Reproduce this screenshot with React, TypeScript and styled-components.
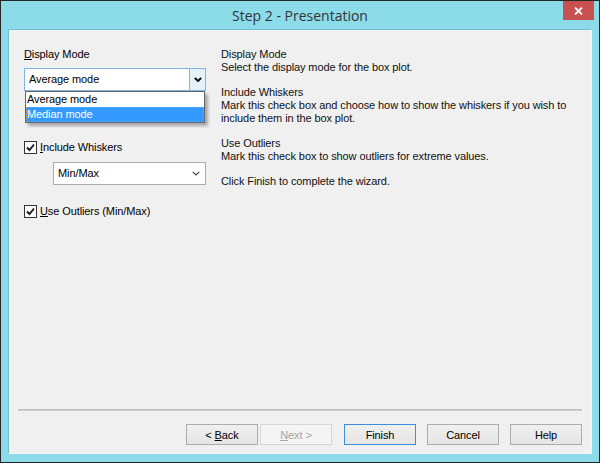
import React from "react";
import styled, { createGlobalStyle } from "styled-components";

const Global = createGlobalStyle`
  html, body { margin: 0; padding: 0; background: #ffffff; }
  * { box-sizing: border-box; }
`;

const Window = styled.div`
  width: 600px;
  height: 463px;
  background: #8cdbe9;
  border: 1px solid #262626;
  display: flex;
  flex-direction: column;
  font-family: "Liberation Sans", Arial, sans-serif;
  font-size: 11px;
  letter-spacing: -0.1px;
  color: #000;
`;

const TitleBar = styled.div`
  height: 28px;
  display: grid;
  grid-template-columns: 1fr auto 1fr;
  align-items: center;
`;

const Title = styled.div`
  grid-column: 2;
  font-family: "Open Sans", "Noto Sans", sans-serif;
  font-size: 14px;
  letter-spacing: 0;
  color: #333333;
  padding-top: 1px;
`;

const CloseButton = styled.div`
  grid-column: 3;
  justify-self: end;
  align-self: start;
  width: 31px;
  height: 19px;
  margin-right: 5px;
  background: #c75050;
  display: flex;
  align-items: center;
  justify-content: center;
`;

const Client = styled.div`
  flex: 1;
  margin: 0 7px 8px;
  background: #f0f0f0;
  border: 1px solid;
  border-color: #72bfcd #f6f6f6 #f6f6f6 #72bfcd;
  display: flex;
  flex-direction: column;
`;

const Body = styled.div`
  display: flex;
  gap: 15px;
  padding: 18px 0 0 15px;
`;

const LeftColumn = styled.div`
  width: 182px;
  display: flex;
  flex-direction: column;
  align-items: flex-start;
`;

const FieldLabel = styled.div`
  line-height: 13px;
  height: 13px;
  margin-bottom: 7px;
`;

const Mnemonic = styled.span`
  text-decoration: underline;
  text-underline-offset: 1px;
`;

const ComboWrap = styled.div<{ $indent?: number; $top?: number }>`
  position: relative;
  margin-left: ${(p) => p.$indent ?? 0}px;
  margin-top: ${(p) => p.$top ?? 0}px;
  width: ${(p) => 182 - (p.$indent ?? 0)}px;
`;

const Combo = styled.div<{ $focused?: boolean }>`
  height: 23px;
  display: flex;
  align-items: stretch;
  background: #ffffff;
  border: 1px solid ${(p) => (p.$focused ? "#7eb4ea" : "#acacac")};
`;

const ComboText = styled.div`
  flex: 1;
  padding-left: 4px;
  line-height: 21px;
  white-space: nowrap;
`;

const DropButton = styled.div<{ $focused?: boolean }>`
  width: 16px;
  display: flex;
  align-items: center;
  justify-content: center;
  background: ${(p) => (p.$focused ? "#e5f1fb" : "transparent")};
  border-left: 1px solid ${(p) => (p.$focused ? "#7eb4ea" : "transparent")};
  margin-right: ${(p) => (p.$focused ? 0 : 2)}px;
`;

const DropList = styled.div`
  position: absolute;
  top: 23px;
  left: 1px;
  width: 180px;
  background: #ffffff;
  border: 1px solid #646464;
  box-shadow: 3px 3px 3px rgba(0, 0, 0, 0.3);
  z-index: 2;
`;

const DropItem = styled.div<{ $selected?: boolean }>`
  height: 15px;
  line-height: 14px;
  padding-left: 1px;
  background: ${(p) => (p.$selected ? "#3399ff" : "#ffffff")};
  color: ${(p) => (p.$selected ? "#ffffff" : "#000000")};
  outline: ${(p) => (p.$selected ? "1px dotted #e8923a" : "none")};
  outline-offset: -1px;
`;

const CheckRow = styled.div<{ $top: number }>`
  display: flex;
  align-items: center;
  gap: 3px;
  margin-top: ${(p) => p.$top}px;
  height: 13px;
  line-height: 13px;
`;

const CheckBox = styled.div`
  width: 13px;
  height: 13px;
  border: 1px solid #333333;
  background: #ffffff;
  display: flex;
  align-items: center;
  justify-content: center;
`;

const RightColumn = styled.div`
  line-height: 12.7px;
  white-space: nowrap;
  color: #111;
`;

const Paragraph = styled.p`
  margin: 0 0 12.7px;
`;

const Footer = styled.div`
  margin-top: auto;
  padding: 0 9px 8px;
`;

const Separator = styled.div`
  height: 2px;
  background: #cdcdcd;
  border-top: 1px solid #bdbdbd;
`;

const ButtonRow = styled.div`
  margin-top: 13px;
  display: flex;
  justify-content: flex-end;
  gap: 11px;
`;

const ButtonPair = styled.div`
  display: flex;
  gap: 2px;
  margin-right: 1px;
`;

const Button = styled.div<{ $default?: boolean; $disabled?: boolean }>`
  width: 72px;
  height: 21px;
  display: flex;
  align-items: center;
  justify-content: center;
  border: 1px solid
    ${(p) => (p.$default ? "#3c8fe0" : p.$disabled ? "#d6d6d6" : "#acacac")};
  background: ${(p) =>
    p.$disabled ? "#f4f4f4" : "linear-gradient(#f0f0f0, #e5e5e5)"};
  color: ${(p) => (p.$disabled ? "#a3a3a3" : "#000")};
  white-space: nowrap;
`;

const Check = () => (
  <svg width="9" height="9" viewBox="0 0 9 9">
    <path d="M1 4.5 L3.5 7 L8 1.5" fill="none" stroke="#1a1a1a" strokeWidth="1.9" />
  </svg>
);

const Chevron = ({ bold }: { bold?: boolean }) => (
  <svg width="8" height="5" viewBox="0 0 8 5">
    <path
      d="M0.8 0.8 L4 4 L7.2 0.8"
      fill="none"
      stroke={bold ? "#000" : "#444"}
      strokeWidth={bold ? 1.9 : 1.2}
    />
  </svg>
);

export default function App() {
  return (
    <>
      <Global />
      <Window>
        <TitleBar>
          <Title>Step 2 - Presentation</Title>
          <CloseButton>
            <svg width="9" height="8" viewBox="0 0 9 8">
              <path d="M1 0.5 L8 7.5 M8 0.5 L1 7.5" stroke="#fff" strokeWidth="1.8" />
            </svg>
          </CloseButton>
        </TitleBar>
        <Client>
          <Body>
            <LeftColumn>
              <FieldLabel>
                <Mnemonic>D</Mnemonic>isplay Mode
              </FieldLabel>
              <ComboWrap>
                <Combo $focused>
                  <ComboText>Average mode</ComboText>
                  <DropButton $focused>
                    <Chevron bold />
                  </DropButton>
                </Combo>
                <DropList>
                  <DropItem>Average mode</DropItem>
                  <DropItem $selected>Median mode</DropItem>
                </DropList>
              </ComboWrap>
              <CheckRow $top={50}>
                <CheckBox>
                  <Check />
                </CheckBox>
                <span>
                  <Mnemonic>I</Mnemonic>nclude Whiskers
                </span>
              </CheckRow>
              <ComboWrap $indent={29} $top={8}>
                <Combo>
                  <ComboText>Min/Max</ComboText>
                  <DropButton>
                    <Chevron />
                  </DropButton>
                </Combo>
              </ComboWrap>
              <CheckRow $top={20}>
                <CheckBox>
                  <Check />
                </CheckBox>
                <span>
                  <Mnemonic>U</Mnemonic>se Outliers (Min/Max)
                </span>
              </CheckRow>
            </LeftColumn>
            <RightColumn>
              <Paragraph>
                Display Mode
                <br />
                Select the display mode for the box plot.
              </Paragraph>
              <Paragraph>
                Include Whiskers
                <br />
                Mark this check box and choose how to show the whiskers if you wish to
                <br />
                include them in the box plot.
              </Paragraph>
              <Paragraph>
                Use Outliers
                <br />
                Mark this check box to show outliers for extreme values.
              </Paragraph>
              <Paragraph>Click Finish to complete the wizard.</Paragraph>
            </RightColumn>
          </Body>
          <Footer>
            <Separator />
            <ButtonRow>
              <ButtonPair>
                <Button>
                  &lt;&nbsp;<Mnemonic>B</Mnemonic>ack
                </Button>
                <Button $disabled>
                  <Mnemonic>N</Mnemonic>ext&nbsp;&gt;
                </Button>
              </ButtonPair>
              <Button $default>Finish</Button>
              <Button>Cancel</Button>
              <Button>Help</Button>
            </ButtonRow>
          </Footer>
        </Client>
      </Window>
    </>
  );
}
